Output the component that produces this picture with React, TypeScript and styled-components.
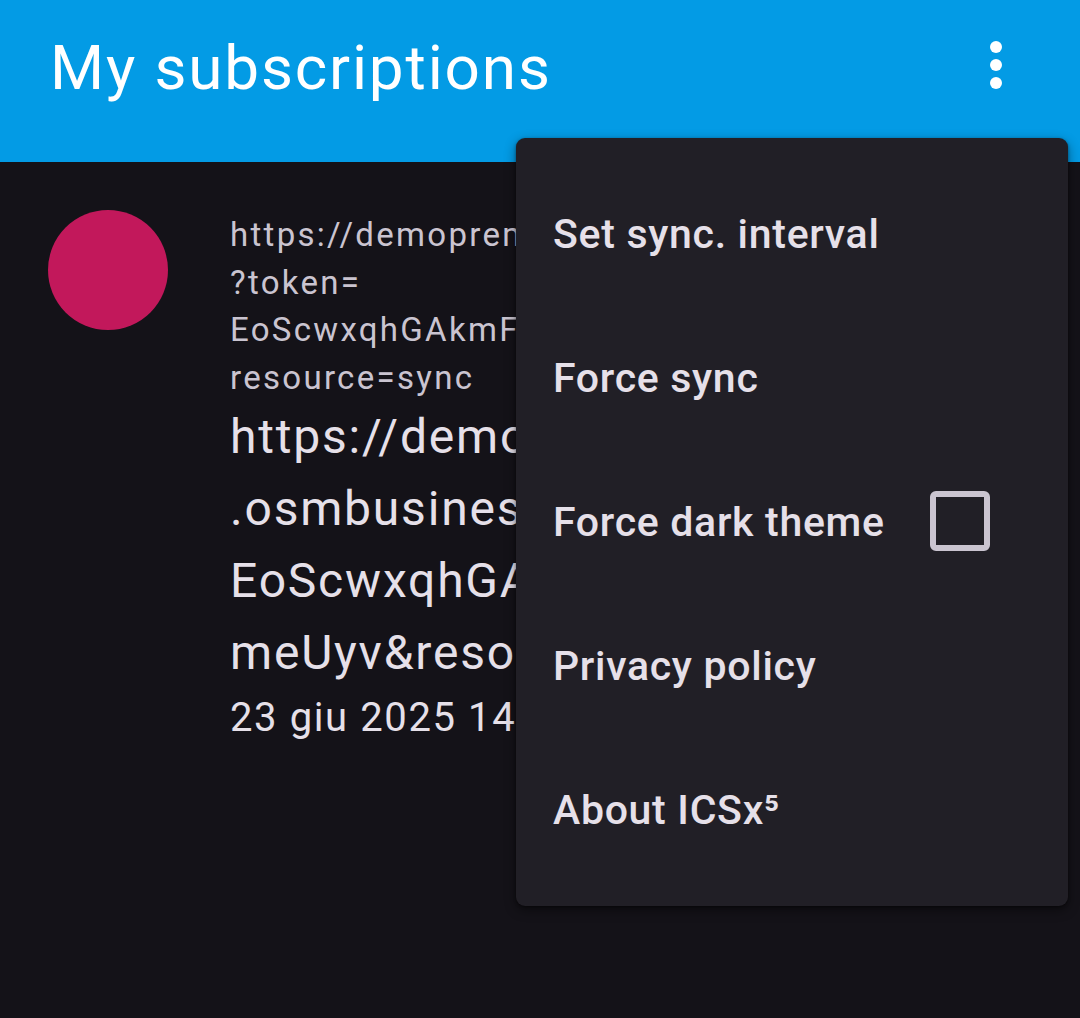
import React from "react";
import styled, { createGlobalStyle } from "styled-components";

const GlobalStyle = createGlobalStyle`
  html, body {
    margin: 0;
    padding: 0;
    background: #141218;
  }
  * { box-sizing: border-box; }
`;

const Screen = styled.div`
  position: relative;
  width: 1080px;
  height: 1018px;
  overflow: hidden;
  background: #141218;
  font-family: Roboto, "Noto Sans", sans-serif;
`;

const AppBar = styled.header`
  height: 162px;
  background: #039be5;
  display: flex;
  align-items: flex-start;
  padding: 39px 60px 0 50px;
`;

const Title = styled.h1`
  margin: 0;
  font-weight: 400;
  font-size: 62px;
  line-height: 58px;
  letter-spacing: 1.85px;
  color: #ffffff;
`;

const MoreButton = styled.div`
  margin-left: auto;
  width: 48px;
  height: 52px;
  display: flex;
  align-items: center;
  justify-content: center;
`;

const ListItem = styled.div`
  display: flex;
  align-items: flex-start;
  padding: 48px 48px 0 48px;
`;

const Avatar = styled.div`
  flex: none;
  width: 120px;
  height: 120px;
  border-radius: 50%;
  background: #c2185b;
`;

const TextCol = styled.div`
  flex: 1;
  min-width: 0;
  margin-left: 62px;
  margin-top: 1px;
  overflow: hidden;
`;

const Line = styled.div<{ $size: "small" | "large" | "date" }>`
  white-space: nowrap;
  font-weight: 400;
  ${({ $size }) =>
    $size === "small"
      ? `
    font-size: 33px;
    line-height: 47.5px;
    letter-spacing: 2.3px;
    color: #cac4d0;
  `
      : $size === "large"
      ? `
    font-size: 48px;
    line-height: 72px;
    letter-spacing: 1.8px;
    color: #e6e0e9;
  `
      : `
    font-size: 40px;
    line-height: 58px;
    letter-spacing: 1.6px;
    color: #e6e0e9;
  `}
`;

const Menu = styled.div`
  position: absolute;
  top: 138px;
  left: 516px;
  width: 552px;
  height: 768px;
  padding: 24px 0;
  background: #211f26;
  border-radius: 9px;
  box-shadow: 0 4px 12px rgba(0, 0, 0, 0.45), 0 1px 3px rgba(0, 0, 0, 0.4);
  display: flex;
  flex-direction: column;
`;

const MenuItem = styled.div`
  height: 144px;
  display: flex;
  align-items: center;
  padding: 0 78px 0 37px;
  font-weight: 500;
  font-size: 41px;
  letter-spacing: 0.7px;
  color: #e6e0e9;
  white-space: nowrap;
`;

const Checkbox = styled.div`
  margin-left: auto;
  width: 60px;
  height: 60px;
  border: 6px solid #cac4d0;
  border-radius: 6px;
  margin-top: -2px;
`;

const MoreIcon = () => (
  <svg width="12" height="48" viewBox="0 0 12 48" aria-hidden="true">
    <circle cx="6" cy="6" r="6" fill="#ffffff" />
    <circle cx="6" cy="24" r="6" fill="#ffffff" />
    <circle cx="6" cy="42" r="6" fill="#ffffff" />
  </svg>
);

const smallLines = [
  "https://demopremium.osmbusiness.it/",
  "?token=",
  "EoScwxqhGAkmF8dWq2xZmeUyv&",
  "resource=sync",
];

const largeLines = [
  "https://demopremium",
  ".osmbusiness.it/ics?token=",
  "EoScwxqhGAkmF8dWq2xZ",
  "meUyv&resource=sync",
];

const menuItems: { label: string; checkbox?: boolean }[] = [
  { label: "Set sync. interval" },
  { label: "Force sync" },
  { label: "Force dark theme", checkbox: true },
  { label: "Privacy policy" },
  { label: "About ICSx⁵" },
];

export default function App() {
  return (
    <Screen>
      <GlobalStyle />
      <AppBar>
        <Title>My subscriptions</Title>
        <MoreButton>
          <MoreIcon />
        </MoreButton>
      </AppBar>
      <ListItem>
        <Avatar />
        <TextCol>
          {smallLines.map((l) => (
            <Line key={l} $size="small">
              {l}
            </Line>
          ))}
          {largeLines.map((l) => (
            <Line key={l} $size="large">
              {l}
            </Line>
          ))}
          <Line $size="date">23 giu 2025 14:32</Line>
        </TextCol>
      </ListItem>
      <Menu>
        {menuItems.map((item) => (
          <MenuItem key={item.label}>
            {item.label}
            {item.checkbox && <Checkbox />}
          </MenuItem>
        ))}
      </Menu>
    </Screen>
  );
}
